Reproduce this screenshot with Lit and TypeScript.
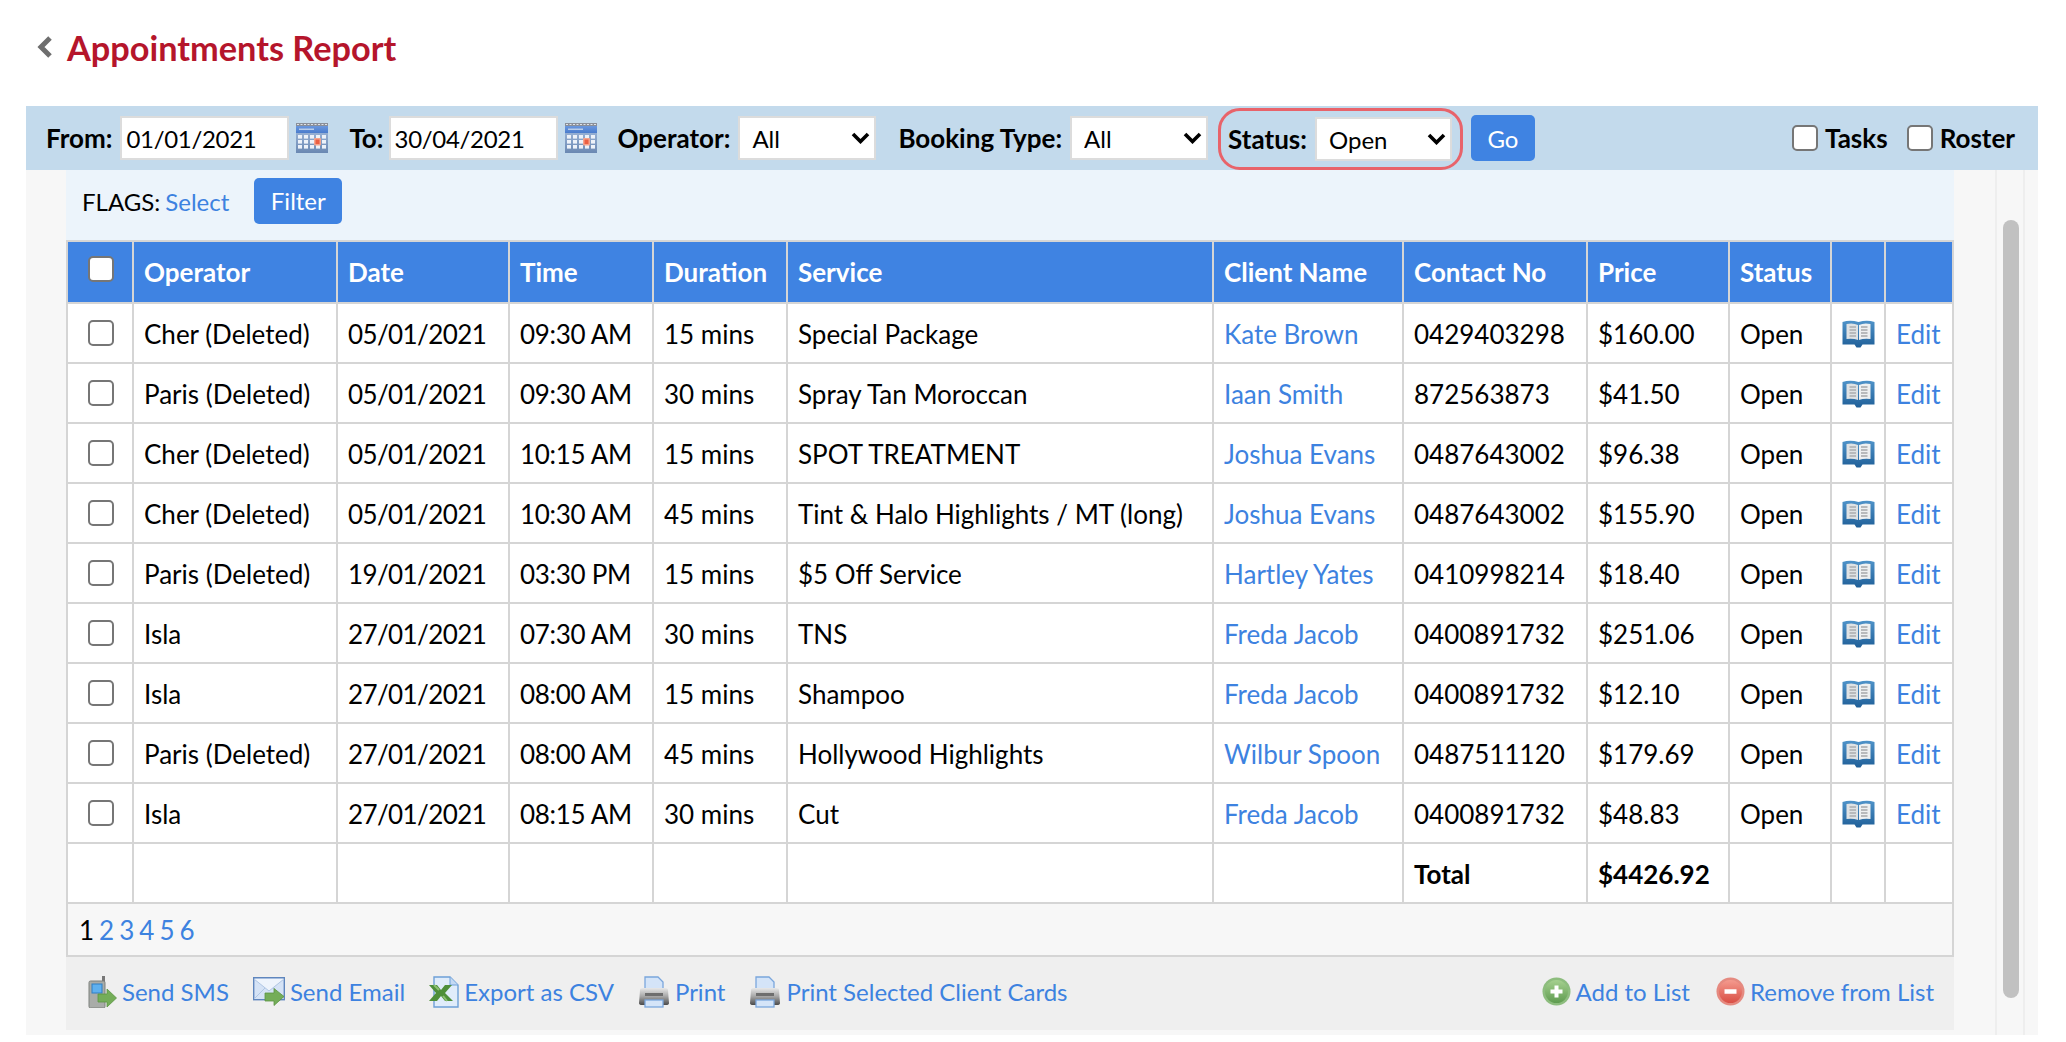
import { LitElement, html, css, svg } from "lit";
import { customElement } from "lit/decorators.js";

const rows = [
  ["Cher (Deleted)", "05/01/2021", "09:30 AM", "15 mins", "Special Package", "Kate Brown", "0429403298", "$160.00"],
  ["Paris (Deleted)", "05/01/2021", "09:30 AM", "30 mins", "Spray Tan Moroccan", "Iaan Smith", "872563873", "$41.50"],
  ["Cher (Deleted)", "05/01/2021", "10:15 AM", "15 mins", "SPOT TREATMENT", "Joshua Evans", "0487643002", "$96.38"],
  ["Cher (Deleted)", "05/01/2021", "10:30 AM", "45 mins", "Tint & Halo Highlights / MT (long)", "Joshua Evans", "0487643002", "$155.90"],
  ["Paris (Deleted)", "19/01/2021", "03:30 PM", "15 mins", "$5 Off Service", "Hartley Yates", "0410998214", "$18.40"],
  ["Isla", "27/01/2021", "07:30 AM", "30 mins", "TNS", "Freda Jacob", "0400891732", "$251.06"],
  ["Isla", "27/01/2021", "08:00 AM", "15 mins", "Shampoo", "Freda Jacob", "0400891732", "$12.10"],
  ["Paris (Deleted)", "27/01/2021", "08:00 AM", "45 mins", "Hollywood Highlights", "Wilbur Spoon", "0487511120", "$179.69"],
  ["Isla", "27/01/2021", "08:15 AM", "30 mins", "Cut", "Freda Jacob", "0400891732", "$48.83"],
];

const colWidths = [66, 204, 172, 144, 134, 426, 190, 184, 142, 102, 54, 68];

const calendarIcon = html`<svg class="cal" width="32" height="30" viewBox="0 0 32 30">
  <defs>
    <linearGradient id="calTop" x1="0" y1="0" x2="0" y2="1"><stop offset="0" stop-color="#6f9be0"/><stop offset="1" stop-color="#4a7ccc"/></linearGradient>
    <linearGradient id="calBody" x1="0" y1="0" x2="0" y2="1"><stop offset="0" stop-color="#a9c1e2"/><stop offset="1" stop-color="#6a88b2"/></linearGradient>
  </defs>
  <rect x="0" y="1" width="32" height="29" fill="url(#calBody)"/>
  <rect x="0" y="2" width="32" height="8" fill="url(#calTop)"/>
  <rect x="0" y="0" width="32" height="3" fill="#8a8f99"/>
  <path d="M1 1.5H31" stroke="#dfe3e8" stroke-width="1" stroke-dasharray="2 1.5"/>
  <rect x="3" y="5.5" width="15" height="1.5" fill="#b9cdea"/>
  ${[12, 17, 22].flatMap((y) =>
    [2, 8, 14, 20, 26].map((x) => svg`<rect x=${x} y=${y} width="4" height="3.6" fill="#edf2f9"/>`)
  )}
  <rect x="18" y="15" width="7" height="7.500" rx="1" fill="#f6a48c"/>
  <rect x="19.500" y="16.500" width="4" height="4.500" fill="#ec5f42"/>
</svg>`;

const bookIcon = html`<svg class="book" width="33" height="28" viewBox="0 0 33 28">
  <defs>
    <linearGradient id="bk" x1="0" y1="0" x2="0" y2="1"><stop offset="0" stop-color="#4f93c9"/><stop offset="1" stop-color="#1f5f98"/></linearGradient>
  </defs>
  <path d="M0.500 2 Q8 -0.500 16.500 2 Q25 -0.500 32.500 2 V24.500 H20.500 L18.500 27.500 H14.500 L12.500 24.500 H0.500 Z" fill="url(#bk)"/>
  <path d="M4.500 4 Q11 2.500 16 5 V20 Q11 18 4.500 19 Z" fill="#dfe2e4"/>
  <path d="M28.500 4 Q22 2.500 17 5 V20 Q22 18 28.500 19 Z" fill="#eef0f1"/>
  <path d="M7.500 7H14M7.500 10H14M7.500 13H14M7.500 16H14M19 7H25.500M19 10H25.500M19 13H25.500M19 16H25.500" stroke="#b8babc" stroke-width="1.800"/>
</svg>`;

const smsIcon = html`<svg width="29" height="32" viewBox="0 0 29 32">
  <rect x="14" y="0" width="3" height="8" fill="#777"/>
  <rect x="1" y="5" width="16" height="27" rx="1.500" fill="#a9aca8" stroke="#7d807c"/>
  <rect x="4" y="8" width="10" height="9" fill="#5fb0ee" stroke="#2f7ec4"/>
  <path d="M10 18 H19 V13 L28.500 22 L19 31 V26 H10 Z" fill="#74ad58" stroke="#5a9443" stroke-width="0.800"/>
</svg>`;

const emailIcon = html`<svg width="32" height="29" viewBox="0 0 32 29">
  <rect x="0.700" y="0.700" width="30.600" height="22" fill="#d5e3f6" stroke="#5f86bd" stroke-width="1.400"/>
  <path d="M1 2 L16 14 L31 2" fill="#eef4fc" stroke="#b0c6e4"/>
  <path d="M1 22 L12 11 M31 22 L20 11" stroke="#b0c6e4" fill="none"/>
  <path d="M12 16 H21 V11.500 L31 19.500 L21 28.500 V24 H12 Z" fill="#74ad58" stroke="#5a9443" stroke-width="0.800"/>
</svg>`;

const csvIcon = html`<svg width="30" height="32" viewBox="0 0 30 32">
  <path d="M5 1 H21 L29 9 V31 H5 Z" fill="#e0ecfa" stroke="#6ea0d8" stroke-width="1.400"/>
  <path d="M21 1 V9 H29" fill="#c3d9f3" stroke="#6ea0d8"/>
  <path d="M0 9 H8 L12 14 L16 9 H23 L16 17 L24 25 H16 L12 20 L8 25 H0 L7 17 Z" fill="#4e8f3a"/>
  <path d="M5 9 L10 14 M14 20 L18 25" stroke="#8cbf72" stroke-width="2"/>
</svg>`;

const printIcon = html`<svg width="32" height="32" viewBox="0 0 32 32">
  <defs>
    <linearGradient id="pr" x1="0" y1="0" x2="0" y2="1"><stop offset="0" stop-color="#e8e8e8"/><stop offset="0.500" stop-color="#a5a5a5"/><stop offset="1" stop-color="#4b4b4b"/></linearGradient>
  </defs>
  <path d="M7 1 H20 L25 6 V16 H7 Z" fill="#d4e4f8" stroke="#7aa6dc" stroke-width="1.300"/>
  <path d="M2 14 Q2 12 5 12 H27 Q30 12 30 14 L31 27 Q31 29 28 29 H4 Q1 29 1 27 Z" fill="url(#pr)"/>
  <rect x="7" y="17" width="18" height="3" fill="#6e6e6e"/>
  <rect x="7" y="24" width="18" height="7" fill="#d4e4f8" stroke="#7aa6dc" stroke-width="1.300"/>
</svg>`;

const addIcon = html`<svg width="29" height="29" viewBox="0 0 29 29">
  <defs><linearGradient id="gr" x1="0" y1="0" x2="0" y2="1"><stop offset="0" stop-color="#a5d08f"/><stop offset="1" stop-color="#5f9c50"/></linearGradient></defs>
  <circle cx="14.500" cy="14.500" r="14" fill="#8dbd7e"/>
  <circle cx="14.500" cy="14.500" r="11.500" fill="url(#gr)"/>
  <path d="M14.500 8.500 V20.500 M8.500 14.500 H20.500" stroke="#fff" stroke-width="4"/>
</svg>`;

const removeIcon = html`<svg width="29" height="29" viewBox="0 0 29 29">
  <defs><linearGradient id="rd" x1="0" y1="0" x2="0" y2="1"><stop offset="0" stop-color="#f49a8e"/><stop offset="1" stop-color="#d94f45"/></linearGradient></defs>
  <circle cx="14.500" cy="14.500" r="14" fill="#e58a80"/>
  <circle cx="14.500" cy="14.500" r="11.500" fill="url(#rd)"/>
  <path d="M8.500 14.500 H20.500" stroke="#fff" stroke-width="4.500"/>
</svg>`;

@customElement("app-root")
export class AppRoot extends LitElement {
  static styles = css`
    :host {
      display: block;
      font-family: Lato, "Liberation Sans", sans-serif;
      font-size: 26px;
      color: #000;
      background: #fff;
      height: 1042px;
      overflow: hidden;
    }
    a { color: #3d82e0; text-decoration: none; }
    .head {
      display: flex;
      align-items: center;
      height: 106px;
      box-sizing: border-box;
      padding: 0 0 12px 37px;
    }
    .head svg { display: block; margin-right: 14px; }
    h1 {
      margin: 0;
      font-size: 34.3px;
      font-weight: 700;
      color: #b5152b;
    }
    .toolbar {
      display: flex;
      align-items: center;
      height: 64px;
      margin: 0 28px 0 26px;
      padding: 0 23px 0 20px;
      background: #c3daec;
      font-weight: 700;
      box-sizing: border-box;
    }
    .date {
      box-sizing: border-box;
      width: 169px;
      height: 44px;
      margin-left: 5px;
      border: 2px solid #dcdcdc;
      padding: 0 4px;
      font: 400 24px Lato, sans-serif;
      letter-spacing: -0.3px;
      color: #000;
      background: #fff;
      outline: none;
    }
    .date.from { margin-left: 8px; }
    .cal { display: block; margin-left: 7px; margin-right: 21px; }
    .sel {
      position: relative;
      display: block;
      margin-left: 8px;
    }
    .sel select {
      display: block;
      appearance: none;
      box-sizing: border-box;
      width: 138px;
      height: 44px;
      border: 2px solid #dcdcdc;
      border-radius: 0;
      padding: 0 0 0 12px;
      font: 400 24px Lato, sans-serif;
      color: #000;
      background: #fff;
    }
    .sel svg { position: absolute; right: 6px; top: 16px; pointer-events: none; }
    .op { margin-right: 22px; }
    .ring {
      display: flex;
      align-items: center;
      box-sizing: border-box;
      height: 62px;
      margin-top: 2px;
      margin-left: -12px;
      padding: 0 8px 0 7px;
      border: 3px solid #e8636a;
      border-radius: 22px;
    }
    .ring .sel select { width: 137px; }
    button {
      border: 0;
      border-radius: 5px;
      background: #3f83e2;
      color: #fff;
      font: 400 24px Lato, sans-serif;
      padding: 0;
    }
    .go { width: 64px; height: 46px; margin-left: 8px; }
    .right { display: flex; align-items: center; margin-left: auto; }
    .right label { display: flex; align-items: center; gap: 7px; }
    .right label + label { margin-left: 19px; }
    input[type="checkbox"] {
      appearance: none;
      display: block;
      box-sizing: border-box;
      width: 26px;
      height: 26px;
      margin: 0;
      border: 2px solid #767676;
      border-radius: 5px;
      background: #fff;
    }
    .panel {
      display: flex;
      margin: 0 28px 0 26px;
      height: 865px;
      background: #f7f7f7;
    }
    .main { width: 1888px; margin-left: 40px; }
    .flags {
      display: flex;
      align-items: center;
      box-sizing: border-box;
      height: 70px;
      padding: 0 0 8px 16px;
      background: #ecf4fb;
      font-size: 24px;
    }
    .flags a { margin-left: 5px; }
    .filter { width: 88px; height: 46px; margin-left: 25px; padding-bottom: 2px; }
    table {
      border-collapse: collapse;
      table-layout: fixed;
      width: 1888px;
      background: #fff;
    }
    th, td {
      border: 2px solid #d5d5d5;
      padding: 2px 0 0 10px;
      height: 60px;
      box-sizing: border-box;
      text-align: left;
      white-space: nowrap;
      overflow: hidden;
    }
    th { height: 62px; padding: 0 0 0 10px; background: #3f83e2; color: #fff; font-weight: 700; }
    td:nth-child(3) { letter-spacing: -0.6px; }
    td:nth-child(4) { letter-spacing: -0.3px; }
    td.chk, th.chk { padding: 0 0 0 20px; }
    th.chk input { margin-top: -7px; }
    td.chk input { margin-top: -1px; }
    td.ico svg { display: block; }
    .pages {
      display: flex;
      align-items: center;
      gap: 5px;
      box-sizing: border-box;
      height: 53px;
      padding: 0 0 0 11px;
      border: 2px solid #d5d5d5;
      border-top: 0;
      background: #f7f7f7;
    }
    .actions {
      display: flex;
      align-items: center;
      box-sizing: border-box;
      height: 73px;
      padding: 0 20px 4px 22px;
      background: #efefef;
      font-size: 24px;
    }
    .actions a { display: flex; align-items: center; gap: 5px; }
    .actions svg { display: block; flex: none; }
    .actions .ml { margin-left: 24px; }
    .actions .push { margin-left: auto; }
    .actions .wide { margin-left: 26px; }
    .gutter {
      box-sizing: border-box;
      width: 30px;
      margin-left: 41px;
      padding: 50px 0 0 6px;
      border-left: 2px solid #eee;
      border-right: 2px solid #eee;
    }
    .thumb { width: 16px; height: 778px; border-radius: 8px; background: #c1c1c1; }
  `;

  private chevron() {
    return html`<svg width="19" height="12" viewBox="0 0 19 12"><path d="M2 2 L9.500 9.500 L17 2" fill="none" stroke="#000" stroke-width="3.600"/></svg>`;
  }

  render() {
    return html`
      <div class="head">
        <svg width="16" height="22" viewBox="0 0 16 22"><path d="M13 2 L4 11 L13 20" fill="none" stroke="#6e6e6e" stroke-width="5"/></svg>
        <h1>Appointments Report</h1>
      </div>
      <div class="toolbar">
        <span>From:</span>
        <input class="date from" type="text" .value=${"01/01/2021"} />
        ${calendarIcon}
        <span>To:</span>
        <input class="date" type="text" .value=${"30/04/2021"} />
        ${calendarIcon}
        <span>Operator:</span>
        <span class="sel op"><select><option>All</option></select>${this.chevron()}</span>
        <span>Booking Type:</span>
        <span class="sel op"><select><option>All</option></select>${this.chevron()}</span>
        <div class="ring">
          <span>Status:</span>
          <span class="sel"><select><option>Open</option></select>${this.chevron()}</span>
        </div>
        <button class="go">Go</button>
        <div class="right">
          <label><input type="checkbox" />Tasks</label>
          <label><input type="checkbox" />Roster</label>
        </div>
      </div>
      <div class="panel">
        <div class="main">
          <div class="flags">
            <span>FLAGS:</span><a>Select</a>
            <button class="filter">Filter</button>
          </div>
          <table>
            <colgroup>${colWidths.map((w) => html`<col style="width:${w}px" />`)}</colgroup>
            <thead>
              <tr>
                <th class="chk"><input type="checkbox" /></th>
                <th>Operator</th><th>Date</th><th>Time</th><th>Duration</th><th>Service</th>
                <th>Client Name</th><th>Contact No</th><th>Price</th><th>Status</th><th></th><th></th>
              </tr>
            </thead>
            <tbody>
              ${rows.map(
                (r) => html`<tr>
                  <td class="chk"><input type="checkbox" /></td>
                  <td>${r[0]}</td><td>${r[1]}</td><td>${r[2]}</td><td>${r[3]}</td><td>${r[4]}</td>
                  <td><a>${r[5]}</a></td><td>${r[6]}</td><td>${r[7]}</td><td>Open</td>
                  <td class="ico">${bookIcon}</td><td><a>Edit</a></td>
                </tr>`
              )}
              <tr>
                <td></td><td></td><td></td><td></td><td></td><td></td><td></td>
                <td><b>Total</b></td><td><b>$4426.92</b></td><td></td><td></td><td></td>
              </tr>
            </tbody>
          </table>
          <div class="pages"><span>1</span><a>2</a><a>3</a><a>4</a><a>5</a><a>6</a></div>
          <div class="actions">
            <a>${smsIcon}Send SMS</a>
            <a class="ml">${emailIcon}Send Email</a>
            <a class="ml">${csvIcon}Export as CSV</a>
            <a class="ml">${printIcon}Print</a>
            <a class="ml">${printIcon}Print Selected Client Cards</a>
            <a class="push">${addIcon}Add to List</a>
            <a class="wide">${removeIcon}Remove from List</a>
          </div>
        </div>
        <div class="gutter"><div class="thumb"></div></div>
      </div>
    `;
  }
}
